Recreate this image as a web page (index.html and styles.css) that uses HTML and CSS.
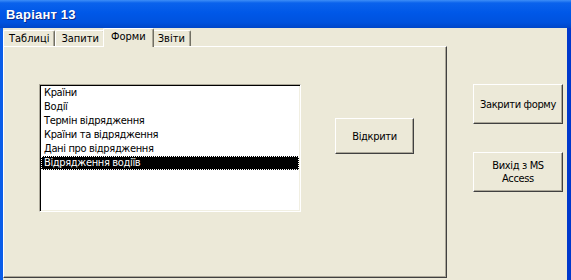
FILE: index.html
```html
<!DOCTYPE html>
<html lang="uk">

<head>
    <meta charset="UTF-8">
    <meta name="viewport" content="width=device-width, initial-scale=1.0">
    <title>Варіант 13</title>
    <link rel="stylesheet" href="styles.css">
</head>

<body>
    <div class="window">
        <div class="titlebar"><span class="title">Варіант 13</span></div>
        <div class="frame">
            <div class="tabs">
                <div class="tabstrip">
                    <div class="tab">Таблиці</div>
                    <div class="tab">Запити</div>
                    <div class="tab active">Форми</div>
                    <div class="tab">Звіти</div>
                </div>
                <div class="page">
                    <div class="listbox">
                        <div class="item">Країни</div>
                        <div class="item">Водії</div>
                        <div class="item">Термін відрядження</div>
                        <div class="item">Країни та відрядження</div>
                        <div class="item">Дані про відрядження</div>
                        <div class="item selected">Відрядження водіїв</div>
                    </div>
                    <button class="btn btn-open">Відкрити</button>
                </div>
            </div>
            <div class="side">
                <button class="btn btn-side">Закрити форму</button>
                <button class="btn btn-side">Вихід з MS<br>Access</button>
            </div>
        </div>
    </div>
</body>

</html>
```

FILE: styles.css
```css
body {
    margin: 0;
    background-color: #ece9d8;
    font-family: 'DejaVu Sans Condensed', 'DejaVu Sans', sans-serif;
    font-size: 11px;
    letter-spacing: -0.35px;
    color: #000;
}

.window {
    width: 571px;
    height: 280px;
    display: flex;
    flex-direction: column;
    overflow: hidden;
}

.titlebar {
    height: 28px;
    flex: none;
    display: flex;
    align-items: center;
    padding-left: 6px;
    background: linear-gradient(to bottom, #3d8ef7 0, #0a62ec 3px, #0058e8 45%, #0052de 80%, #0046c8 100%);
}

.title {
    color: #fff;
    font-family: 'Liberation Sans', Arial, sans-serif;
    font-weight: bold;
    font-size: 13px;
    letter-spacing: 0.2px;
    text-shadow: 1px 1px 0 #0a2a8a;
}

.frame {
    flex: 1;
    display: flex;
    border-left: 3px solid #0a5de8;
    border-right: 4px solid #0038cc;
}

.tabs {
    width: 444px;
    display: flex;
    flex-direction: column;
}

.tabstrip {
    height: 18px;
    display: flex;
    align-items: flex-end;
}

.tab {
    height: 16px;
    box-sizing: border-box;
    padding: 0 5px;
    line-height: 15px;
    letter-spacing: 0;
    border-top: 1px solid #fff;
    border-left: 1px solid #fff;
    border-right: 1px solid #716f64;
    box-shadow: inset -1px 0 0 #aca899;
    border-radius: 2px 2px 0 0;
}

.tab.active {
    height: 19px;
    margin: 0 -2px -1px;
    padding: 0 7px;
    position: relative;
    z-index: 1;
    background-color: #ece9d8;
}

.page {
    height: 232px;
    box-sizing: border-box;
    display: flex;
    align-items: flex-start;
    padding: 37px 0 0 35px;
    border-top: 1px solid #fff;
    border-left: 1px solid #fff;
    border-right: 1px solid #404040;
    border-bottom: 1px solid #404040;
    box-shadow: inset -1px -1px 0 #aca899;
}

.listbox {
    width: 262px;
    height: 128px;
    box-sizing: border-box;
    background: #fff;
    border: 1px solid;
    border-color: #aca899 #fff #fff #aca899;
    box-shadow: inset 1px 1px 0 #000, inset -1px -1px 0 #f1efe2;
    padding: 1px 1px 0 1px;
}

.item {
    height: 14px;
    line-height: 14px;
    padding-left: 3px;
    white-space: nowrap;
}

.item.selected {
    background: #000;
    color: #fff;
    outline: 1px dotted #fff;
    outline-offset: -1px;
}

.btn {
    box-sizing: border-box;
    margin: 0;
    padding: 0;
    font: inherit;
    letter-spacing: inherit;
    color: #000;
    background-color: #ece9d8;
    border: 1px solid;
    border-color: #fff #404040 #404040 #fff;
    box-shadow: inset -1px -1px 0 #aca899;
    line-height: 13px;
}

.btn-open {
    width: 79px;
    height: 36px;
    margin: 34px 0 0 34px;
}

.side {
    display: flex;
    flex-direction: column;
    gap: 28px;
    padding: 56px 0 0 26px;
}

.btn-side {
    width: 90px;
    height: 40px;
}
```
